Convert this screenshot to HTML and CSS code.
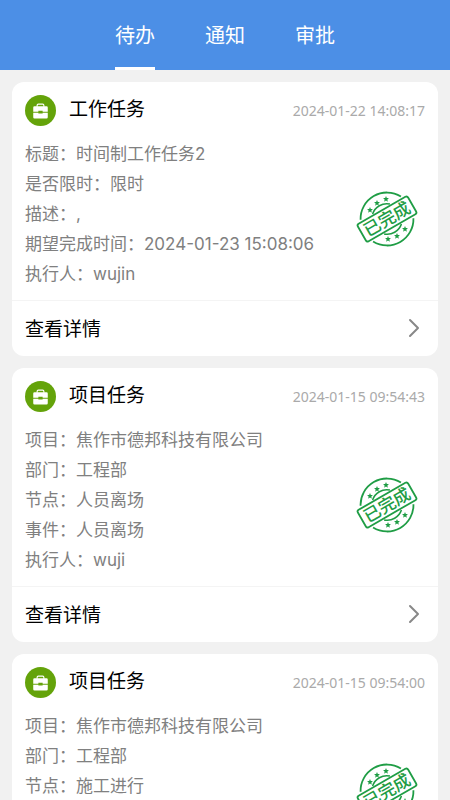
FILE: index.html
```html
<!DOCTYPE html>
<html lang="zh-CN">
  <head>
    <meta charset="UTF-8" />
    <meta name="viewport" content="width=device-width, initial-scale=1.0" />
    <title>待办</title>
    <link rel="stylesheet" href="styles.css">
  </head>
  <body>
    <!-- shared icons -->
    <svg class="sprite" aria-hidden="true">
      <symbol id="icon-case" viewBox="0 0 32 32">
        <circle cx="16" cy="16" r="16" fill="#64a30a" />
        <path d="M12.500 12v-1.200q0-1.300 1.300-1.300h4.400q1.300 0 1.300 1.300V12" fill="none" stroke="#fff" stroke-width="1.200" />
        <path d="M9.800 11.500h12.400q1.300 0 1.300 1.300v4.500h-5.300v-1h-4.400v1H8.500v-4.500q0-1.300 1.300-1.300z" fill="#fff" />
        <path d="M8.500 18.200h5.300v1h4.400v-1h5.300v4.700q0 1.300-1.300 1.300H9.800q-1.300 0-1.300-1.300z" fill="#fff" />
      </symbol>
      <symbol id="icon-arrow" viewBox="0 0 12 20">
        <path d="M2 2l8 8-8 8" fill="none" stroke="#888" stroke-width="2" stroke-linecap="round" stroke-linejoin="round" />
      </symbol>
      <symbol id="star" viewBox="-5 -5 10 10">
        <path d="M0-5L1.400-1.800 4.900-1.500 2.300.900 3 4.400 0 2.600-3 4.400-2.300.900-4.900-1.500-1.400-1.800z" fill="#1f9d45" />
      </symbol>
      <symbol id="icon-done" viewBox="-32 -30 64 60">
        <g transform="rotate(-30)" fill="none" stroke="#1f9d45">
          <path d="M-23.300-12.500A26.400 26.400 0 0 1 23.300-12.500M-23.300 12.500A26.400 26.400 0 0 0 23.300 12.500" stroke-width="1.800" />
          <path d="M-10-11.500A15 15 0 0 1 10-11.500M-10 11.500A15 15 0 0 0 10 11.500" stroke-width="1.600" />
          <rect x="-29" y="-10" width="58" height="20" rx="2" stroke-width="1.800" />
          <text class="stamp-text" x="0" y="6" text-anchor="middle">已完成</text>
        </g>
        <use href="#star" x="-20" y="-12" width="6" height="6" />
        <use href="#star" x="-13" y="-19" width="6" height="6" />
        <use href="#star" x="-4" y="-23" width="6" height="6" />
        <use href="#star" x="-2" y="17" width="6" height="6" />
        <use href="#star" x="7" y="14" width="6" height="6" />
        <use href="#star" x="15" y="7" width="6" height="6" />
      </symbol>
    </svg>

    <nav class="tabs">
      <a class="tab active" href="#todo">待办</a>
      <a class="tab" href="#notice">通知</a>
      <a class="tab" href="#approve">审批</a>
    </nav>

    <main class="list" id="todo">
      <article class="card">
        <header class="card-head">
          <svg class="card-icon"><use href="#icon-case" /></svg>
          <h2>工作任务</h2>
          <time>2024-01-22 14:08:17</time>
        </header>
        <div class="card-body">
          <p>标题：时间制工作任务2</p>
          <p>是否限时：限时</p>
          <p>描述：,</p>
          <p>期望完成时间：2024-01-23 15:08:06</p>
          <p>执行人：wujin</p>
          <svg class="stamp"><use href="#icon-done" /></svg>
        </div>
        <a class="card-foot" href="#detail">
          查看详情
          <svg class="arrow"><use href="#icon-arrow" /></svg>
        </a>
      </article>

      <article class="card">
        <header class="card-head">
          <svg class="card-icon"><use href="#icon-case" /></svg>
          <h2>项目任务</h2>
          <time>2024-01-15 09:54:43</time>
        </header>
        <div class="card-body">
          <p>项目：焦作市德邦科技有限公司</p>
          <p>部门：工程部</p>
          <p>节点：人员离场</p>
          <p>事件：人员离场</p>
          <p>执行人：wuji</p>
          <svg class="stamp"><use href="#icon-done" /></svg>
        </div>
        <a class="card-foot" href="#detail">
          查看详情
          <svg class="arrow"><use href="#icon-arrow" /></svg>
        </a>
      </article>

      <article class="card">
        <header class="card-head">
          <svg class="card-icon"><use href="#icon-case" /></svg>
          <h2>项目任务</h2>
          <time>2024-01-15 09:54:00</time>
        </header>
        <div class="card-body">
          <p>项目：焦作市德邦科技有限公司</p>
          <p>部门：工程部</p>
          <p>节点：施工进行</p>
          <p>事件：施工进行</p>
          <p>执行人：wuji</p>
          <svg class="stamp"><use href="#icon-done" /></svg>
        </div>
        <a class="card-foot" href="#detail">
          查看详情
          <svg class="arrow"><use href="#icon-arrow" /></svg>
        </a>
      </article>
    </main>
  </body>
</html>
```
FILE: styles.css
```css
* {
  box-sizing: border-box;
}

body {
  margin: 0;
  background-color: #f1f1f1;
  color: #000;
  font-family: Inter, "Noto Sans CJK SC", sans-serif;
}

h2,
p {
  margin: 0;
}

a {
  color: inherit;
  text-decoration: none;
}

.sprite {
  position: absolute;
  width: 0;
  height: 0;
}

/* Tabs */
.tabs {
  display: flex;
  justify-content: center;
  gap: 50px;
  height: 70px;
  background-color: #4c8fe6;
}

.tab {
  color: #fff;
  font-size: 20px;
  line-height: 72px;
}

.tab.active {
  border-bottom: 3px solid #fff;
}

/* Cards */
.list {
  display: flex;
  flex-direction: column;
  gap: 12px;
  padding: 12px;
}

.card {
  background-color: #fff;
  border-radius: 12px;
}

.card-head {
  display: flex;
  align-items: center;
  height: 57px;
  padding: 0 13px;
}

.card-icon {
  width: 31px;
  height: 31px;
}

.card-head h2 {
  margin-left: 13px;
  padding-bottom: 6px;
  font-size: 19px;
  font-weight: 400;
}

.card-head time {
  margin-left: auto;
  color: #aaa;
  font-family: "Noto Sans", sans-serif;
  font-size: 14px;
}

.card-body {
  position: relative;
  padding: 0 13px 11px;
  color: #808080;
  font-size: 17px;
  line-height: 30px;
}

.stamp {
  position: absolute;
  top: 50px;
  right: 19px;
  width: 64px;
  height: 60px;
}

.stamp-text {
  fill: #1f9d45;
  stroke: none;
  font-size: 17px;
  font-weight: 500;
}

.card-foot {
  display: flex;
  align-items: center;
  justify-content: space-between;
  height: 56px;
  padding: 0 18px 2px 13px;
  border-top: 1px solid #f4f4f4;
  font-size: 19px;
}

.arrow {
  width: 12px;
  height: 20px;
}
```
